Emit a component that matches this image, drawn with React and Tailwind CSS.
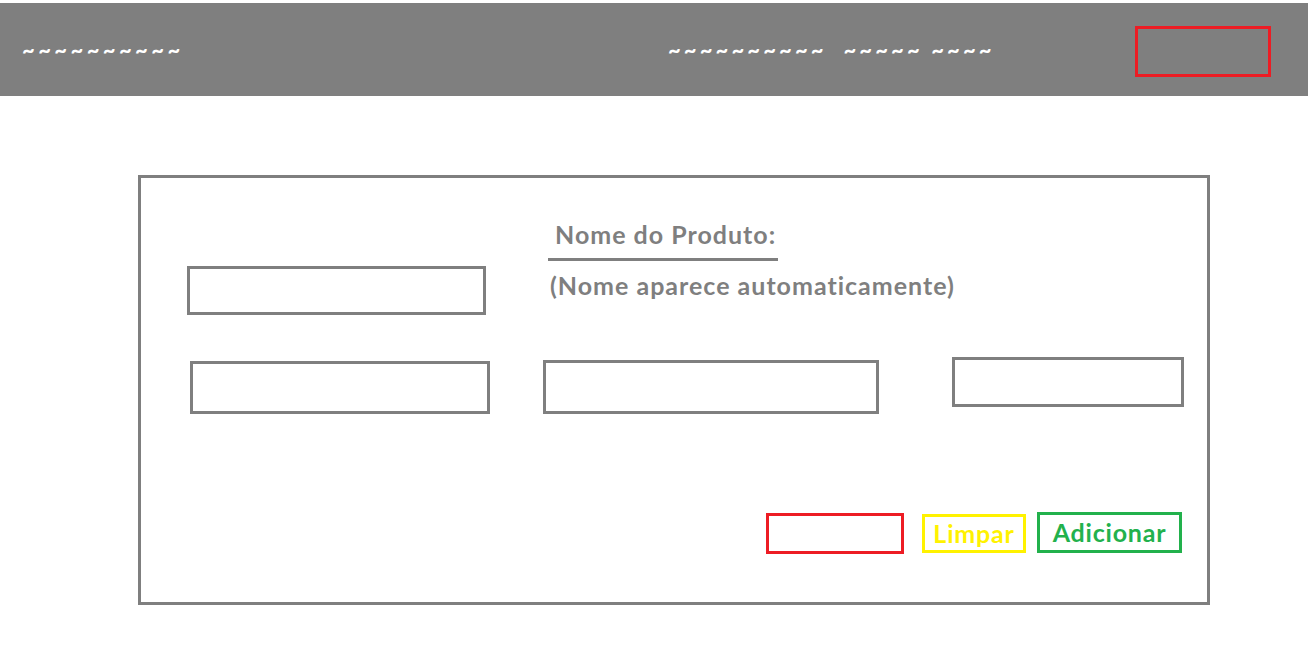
const App = () => {
  return (
    <div
      className="min-h-screen bg-white pt-[3px]"
      style={{ fontFamily: "Lato, 'Noto Sans', sans-serif" }}
    >
      {/* Header */}
      <header className="flex items-center h-[93px] bg-[#7f7f7f] pl-[22px] pr-[37px]">
        <span className="w-[646px] text-white font-bold text-[22px] tracking-[3.4px] leading-none whitespace-pre">
          ~~~~~~~~~~
        </span>
        <span className="text-white font-bold text-[22px] tracking-[3.1px] leading-none whitespace-pre">
          ~~~~~~~~~~  ~~~~~ ~~~~
        </span>
        <div className="ml-auto mt-[3px] w-[136px] h-[51px] border-[3px] border-[#ed1c24]"></div>
      </header>

      {/* Form card */}
      <div className="ml-[138px] mt-[79px] w-[1072px] h-[430px] border-[3px] border-[#7f7f7f] flex flex-col">
        <div className="flex items-start mt-[42px] ml-[46px]">
          <div className="mt-[46px] w-[299px] h-[49px] border-[3px] border-[#7f7f7f]"></div>
          <div className="ml-[62px] flex flex-col text-[#7f7f7f] font-bold text-[25px] tracking-[1px]">
            <div className="w-[230px] pl-[7px] pb-[10px] leading-[28px] border-b-[3px] border-[#7f7f7f] whitespace-nowrap">
              Nome do Produto:
            </div>
            <div className="mt-[10px] ml-[2px] leading-[28px] whitespace-nowrap">
              (Nome aparece automaticamente)
            </div>
          </div>
        </div>

        <div className="flex items-start mt-[42px] ml-[49px]">
          <div className="mt-[4px] w-[300px] h-[53px] border-[3px] border-[#7f7f7f]"></div>
          <div className="ml-[53px] mt-[3px] w-[336px] h-[54px] border-[3px] border-[#7f7f7f]"></div>
          <div className="ml-[73px] w-[232px] h-[50px] border-[3px] border-[#7f7f7f]"></div>
        </div>

        <div className="flex items-start justify-end mt-[98px] mr-[25px] font-bold text-[25px] tracking-[0.8px]">
          <div className="mt-[1px] w-[138px] h-[41px] border-[3px] border-[#ed1c24]"></div>
          <button className="ml-[18px] mt-[2px] w-[104px] h-[39px] border-[3px] border-[#fff200] text-[#fff200] leading-none flex items-center justify-center">
            Limpar
          </button>
          <button className="ml-[11px] w-[145px] h-[41px] border-[3px] border-[#22b14c] text-[#22b14c] leading-none flex items-center justify-center">
            Adicionar
          </button>
        </div>
      </div>
    </div>
  );
};

export default App;
